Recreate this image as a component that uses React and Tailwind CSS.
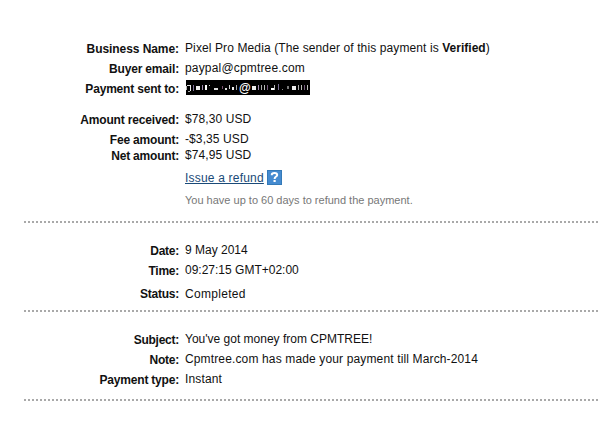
const PAYMENT = [
  { label: 'Business Name:', h: 'h-5', ls: 'tracking-[-0.07px]', vs: 'tracking-[0.11px]', value: <>Pixel Pro Media (The sender of this payment is <b className="tracking-normal">Verified</b>)</> },
  { label: 'Buyer email:', h: 'h-5', ls: 'tracking-[-0.17px]', vs: 'tracking-[0.17px]', value: 'paypal@cpmtree.com' },
  { label: 'Payment sent to:', h: 'h-[31px]', ls: 'tracking-[-0.19px]', vs: 'tracking-normal', value: <Redacted /> },
  { label: 'Amount received:', h: 'h-5', ls: 'tracking-[-0.16px]', vs: 'tracking-[0.1px]', value: '$78,30 USD' },
  { label: 'Fee amount:', h: 'h-4', ls: 'tracking-[-0.2px]', vs: 'tracking-[0.1px]', value: '-$3,35 USD' },
  { label: 'Net amount:', h: 'h-[23px]', ls: 'tracking-[-0.2px]', vs: 'tracking-[0.1px]', value: '$74,95 USD' },
];

const TIMING = [
  { label: 'Date:', h: 'h-5', ls: 'tracking-[-0.25px]', vs: 'tracking-normal', value: '9 May 2014' },
  { label: 'Time:', h: 'h-6', ls: 'tracking-[-0.25px]', vs: 'tracking-normal', value: '09:27:15 GMT+02:00' },
  { label: 'Status:', h: 'h-6', ls: 'tracking-[-0.25px]', vs: 'tracking-[0.3px]', value: 'Completed' },
];

const DETAILS = [
  { label: 'Subject:', h: 'h-5', ls: 'tracking-[-0.25px]', vs: 'tracking-normal', value: "You've got money from CPMTREE!" },
  { label: 'Note:', h: 'h-5', ls: 'tracking-[-0.25px]', vs: 'tracking-[0.14px]', value: 'Cpmtree.com has made your payment till March-2014' },
  { label: 'Payment type:', h: 'h-7', ls: 'tracking-[-0.2px]', vs: 'tracking-[0.15px]', value: 'Instant' },
];

// Leftover strokes of the blacked-out address: [x, y, width, height, colour]
const MARKS = [
  [0, 6, 1, 4, '#bbb'], [1, 5, 3, 1, '#ddd'], [4, 5, 1, 6, '#eee'], [2, 11, 2, 1, '#aaa'],
  [7, 5, 1, 6, '#81709a'], [10, 6, 4, 4, '#eee'], [16, 5, 1, 5, '#a08bb0'], [19, 5, 2, 5, '#fff'], [23, 5, 1, 1, '#ccc'],
  [28, 8, 4, 2, '#ddd'], [36, 6, 1, 3, '#76506f'], [39, 8, 2, 2, '#ddd'], [43, 5, 1, 4, '#ccc'], [46, 7, 2, 3, '#eee'], [50, 5, 1, 5, '#aaa'],
  [66, 6, 4, 4, '#eee'], [72, 5, 1, 5, '#a08bb0'], [75, 5, 1, 5, '#aaa'], [78, 5, 1, 5, '#bbb'], [81, 5, 1, 5, '#765b7d'],
  [85, 8, 3, 2, '#fff'], [88, 5, 1, 5, '#bbb'], [92, 4, 1, 6, '#776d90'], [96, 9, 1, 1, '#888'],
  [101, 6, 2, 3, '#777'], [106, 6, 4, 4, '#eee'], [112, 5, 1, 5, '#aaa'], [115, 5, 1, 5, '#bbb'], [118, 5, 1, 5, '#765b7d'], [121, 5, 1, 5, '#bbb'],
];

function Redacted() {
  return (
    <span className="relative ml-px flex h-[15px] w-[124px] items-center bg-black text-white">
      <svg className="absolute inset-0" width="124" height="15" shapeRendering="crispEdges" aria-hidden="true">
        {MARKS.map(([x, y, w, h, c]) => <rect key={x} x={x} y={y} width={w} height={h} fill={c} />)}
      </svg>
      <span className="pt-px pl-[53px] leading-[14px] font-bold">@</span>
    </span>
  );
}

function Row({ label, value, h, ls, vs }) {
  return (
    <div className={'flex items-start gap-[6px] whitespace-nowrap ' + h}>
      <div className={'w-[179px] shrink-0 text-right font-bold ' + ls + (label === 'Status:' ? '' : ' pt-px')}>{label}</div>
      <div className={vs}>{value}</div>
    </div>
  );
}

function Divider() {
  return <div className="ml-6 h-[2px] bg-[repeating-linear-gradient(to_right,#a9a9a9_0px,#a9a9a9_2px,#fff_2px,#fff_4px)]" />;
}

function Help() {
  return (
    <svg width="15" height="15" viewBox="0 0 15 15" aria-hidden="true">
      <rect width="15" height="15" fill="#347ab8" />
      <rect x="1" y="1" width="13" height="13" fill="#458bd0" />
      <path d="M4.8 5.3V4.7C4.8 3.4 6 2.9 7.5 2.9S10.2 3.5 10.2 4.9C10.2 6.7 7.6 6.5 7.6 9" fill="none" stroke="#fff" strokeWidth="2" />
      <rect x="6.5" y="10" width="2.2" height="2" fill="#fff" />
    </svg>
  );
}

export default function App() {
  return (
    <main className="h-[435px] w-[599px] overflow-hidden bg-white pt-10 font-['Liberation_Sans',Arial,sans-serif] text-[12px] leading-4 text-[#111]">
      <section>
        {PAYMENT.map((r) => <Row key={r.label} {...r} />)}
        <div className="flex h-[23px] items-start gap-[3px] pl-[185px]">
          <a className="tracking-[0.2px] text-[#1a4a78] underline">Issue a refund</a>
          <Help />
        </div>
        <p className="-mt-px mb-px h-7 pl-[185px] text-[11px] text-[#777]">You have up to 60 days to refund the payment.</p>
      </section>
      <Divider />
      <section className="pt-[19px]">{TIMING.map((r) => <Row key={r.label} {...r} />)}</section>
      <Divider />
      <section className="pt-[19px]">{DETAILS.map((r) => <Row key={r.label} {...r} />)}</section>
      <Divider />
    </main>
  );
}
